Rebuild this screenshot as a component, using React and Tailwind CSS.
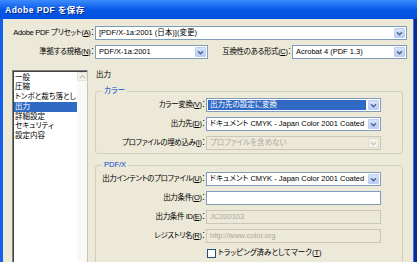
import React from "react";

const Chevron = ({ color = "#4D6185", up = false }) => (
  <svg width="7" height="5" viewBox="0 0 7 5">
    <path d={up ? "M1 4 L3.5 1.5 L6 4" : "M1 1.2 L3.5 3.7 L6 1.2"} stroke={color} strokeWidth="1.4" fill="none" />
  </svg>
);

function Select({ w, text, disabled = false, highlight = false }) {
  return (
    <div
      className={
        "flex h-[14px] shrink-0 border " +
        w +
        (disabled ? " border-[#C9C7BA] bg-[#ECE9D8]" : " border-[#7F9DB9] bg-white")
      }
    >
      <div className="flex min-w-0 flex-1 items-center p-[1px]">
        <div
          className={
            "flex h-full w-full items-center overflow-hidden whitespace-nowrap pl-[2px] " +
            (highlight ? "bg-[#316AC5] text-white" : disabled ? "text-[#ACA899]" : "text-black")
          }
        >
          {text}
        </div>
      </div>
      <div
        className={
          "m-[1px] flex w-[11px] items-center justify-center rounded-[1px] border " +
          (disabled
            ? "border-[#E0DED3] bg-[#F2F1EA]"
            : "border-[#BCCDF4] bg-gradient-to-b from-[#D8E4FC] to-[#B9CDF8]")
        }
      >
        <Chevron color={disabled ? "#C9C7BA" : "#4D6185"} />
      </div>
    </div>
  );
}

function Input({ text = "", disabled = false }) {
  return (
    <div
      className={
        "flex h-[14px] w-[175px] shrink-0 items-center overflow-hidden whitespace-nowrap border pl-[3px] " +
        (disabled ? "border-[#C9C7BA] bg-[#ECE9D8] text-[#ACA899]" : "border-[#7F9DB9] bg-white text-black")
      }
    >
      {text}
    </div>
  );
}

function Row({ label, children }) {
  return (
    <div className="flex h-[14px] items-center">
      <div className="w-[110px] shrink-0 whitespace-nowrap pr-[1px] text-right tracking-[-0.35px]">{label}</div>
      {children}
    </div>
  );
}

function Group({ title, children, top }) {
  return (
    <div className={"relative rounded-[3px] border border-[#D0D0BF] " + top}>
      <span className="absolute -top-[6px] left-[6px] bg-[#ECE9D8] px-[2px] leading-[10px] text-[#0046D5]">
        {title}
      </span>
      {children}
    </div>
  );
}

export default function App() {
  const items = ["一般", "圧縮", "トンボと裁ち落とし", "出力", "詳細設定", "セキュリティ", "設定内容"];
  return (
    <div className="flex h-[262px] w-[417px] flex-col overflow-hidden bg-[#ECE9D8] font-['Liberation_Sans','Noto_Sans_CJK_JP',sans-serif] text-[7.5px] leading-[10px] text-black [font-feature-settings:'palt']">
      {/* title bar */}
      <div className="flex h-[19px] shrink-0 items-center bg-gradient-to-b from-[#3C8CFF] via-[#0858E8] to-[#0050E0] pl-[5px]">
        <span className="text-[8.5px] font-bold tracking-[0.5px] text-white [text-shadow:1px_1px_#0A2A8A]">
          Adobe PDF を保存
        </span>
      </div>
      <div className="flex min-h-0 flex-1">
        <div className="w-[3px] shrink-0 bg-[#1660EE]" />
        <div className="flex min-w-0 flex-1 flex-col">
          {/* top rows */}
          <div className="mt-[7px] flex h-[14px] items-center">
            <div className="w-[92px] shrink-0 whitespace-nowrap pr-[1px] text-right tracking-[-0.3px]">
              Adobe PDF プリセット(<u>A</u>)：
            </div>
            <Select w="w-[312px]" text="[PDF/X-1a:2001 (日本)](変更)" />
          </div>
          <div className="mt-[5px] flex h-[14px] items-center">
            <div className="w-[92px] shrink-0 whitespace-nowrap pr-[1px] text-right tracking-[-0.3px]">
              準拠する規格(<u>N</u>)：
            </div>
            <Select w="w-[113px]" text="PDF/X-1a:2001" />
            <div className="w-[84px] shrink-0 whitespace-nowrap pr-[1px] text-right tracking-[-0.35px]">
              互換性のある形式(<u>C</u>)：
            </div>
            <Select w="w-[115px]" text="Acrobat 4 (PDF 1.3)" />
          </div>

          {/* lower area */}
          <div className="mt-[11px] flex min-h-0 flex-1">
            {/* list box */}
            <div className="ml-[9px] flex w-[76px] shrink-0 border-l border-t border-r border-[#808080] border-r-[#C8C5B8]">
              <div className="flex flex-1 border-l border-t border-[#404040] bg-white">
                <div className="flex-1 pt-[0.5px]">
                  {items.map((it) => (
                    <div
                      key={it}
                      className={
                        "h-[9.8px] whitespace-nowrap pl-[1px] leading-[9.8px] " +
                        (it === "出力" ? "bg-[#316AC5] text-white" : "text-black")
                      }
                    >
                      {it}
                    </div>
                  ))}
                </div>
                <div className="w-[10px] shrink-0 bg-[#F9F9F5]">
                  <div className="flex h-[9px] items-center justify-center rounded-[1px] border border-[#E4E2D8] bg-[#F3F2EC]">
                    <Chevron up color="#C9C7BA" />
                  </div>
                </div>
              </div>
            </div>

            {/* right panel */}
            <div className="ml-[7px] flex w-[308px] shrink-0 flex-col">
              <div className="h-[9px] pl-[1px] leading-[9px]">出力</div>
              <div className="h-px bg-[#D6D3C3]" />
              <Group title="カラー" top="mt-[12px]">
                <div className="flex flex-col gap-[5px] pb-[3px] pt-[6px]">
                  <Row label={<>カラー変換(<u>V</u>)：</>}>
                    <Select w="w-[175px]" text="出力先の設定に変換" highlight />
                  </Row>
                  <Row label={<>出力先(<u>D</u>)：</>}>
                    <Select w="w-[175px]" text="ドキュメント CMYK - Japan Color 2001 Coated" />
                  </Row>
                  <Row label={<>プロファイルの埋め込み(<u>I</u>)：</>}>
                    <Select w="w-[175px]" text="プロファイルを含めない" disabled />
                  </Row>
                </div>
              </Group>
              <Group title="PDF/X" top="mt-[11px]">
                <div className="flex flex-col gap-[5px] pb-[6px] pt-[6px]">
                  <Row label={<>出力インテントのプロファイル(<u>U</u>)：</>}>
                    <Select w="w-[175px]" text="ドキュメント CMYK - Japan Color 2001 Coated" />
                  </Row>
                  <Row label={<>出力条件(<u>O</u>)：</>}>
                    <Input />
                  </Row>
                  <Row label={<>出力条件 ID(<u>E</u>)：</>}>
                    <Input text="JC200103" disabled />
                  </Row>
                  <Row label={<>レジストリ名(<u>R</u>)：</>}>
                    <Input text="http://www.color.org" disabled />
                  </Row>
                  <div className="flex h-[10px] items-center pl-[111px]">
                    <div className="h-[9px] w-[9px] shrink-0 border border-[#1C5180] bg-white" />
                    <span className="ml-[2px] whitespace-nowrap">
                      トラッピング済みとしてマーク(<u>T</u>)
                    </span>
                  </div>
                </div>
              </Group>
            </div>
          </div>
        </div>
        <div className="flex w-[4px] shrink-0">
          <div className="w-px bg-[#3D6FE0]" />
          <div className="flex-1 bg-[#0A2A9A]" />
        </div>
      </div>
    </div>
  );
}
